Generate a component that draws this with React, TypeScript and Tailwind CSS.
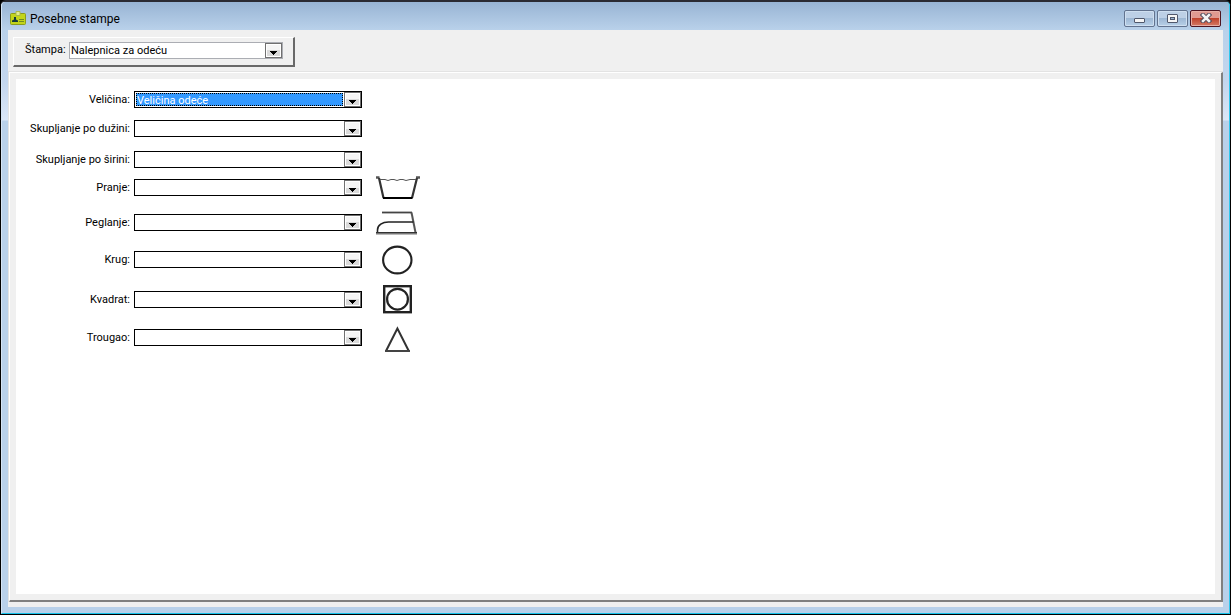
import type { ReactNode } from 'react'
import clsx from 'clsx'

type Field = {
  id: string
  label: string
  options?: string[]
  selected?: boolean
  space: string
  icon?: ReactNode
}

const fields: Field[] = [
  { id: 'velicina', label: 'Veličina:', options: ['Veličina odeće'], selected: true, space: 'mt-3' },
  { id: 'duzina', label: 'Skupljanje po dužini:', space: 'mt-3' },
  { id: 'sirina', label: 'Skupljanje po širini:', space: 'mt-3.5' },
  { id: 'pranje', label: 'Pranje:', space: 'mt-[11px]', icon: <WashIcon /> },
  { id: 'peglanje', label: 'Peglanje:', space: 'mt-[18px]', icon: <IronIcon /> },
  { id: 'krug', label: 'Krug:', space: 'mt-5', icon: <CircleIcon /> },
  { id: 'kvadrat', label: 'Kvadrat:', space: 'mt-[23px]', icon: <SquareIcon /> },
  { id: 'trougao', label: 'Trougao:', space: 'mt-[21px]', icon: <TriangleIcon /> },
]

function WashIcon() {
  return (
    <svg width="46" height="26" viewBox="-1 0 46 26" fill="none" stroke="#333" className="shrink-0">
      <path d="M1 2.5h3.5M41 2.5h4" stroke="#555" strokeWidth="2.5" />
      <path d="M4 3l4.5 20M42 3l-5 20" strokeWidth="2.2" />
      <path d="M5 4.5h5l3 1 3-1h3l3 1 3-1h3l3 1 4-1h6" stroke="#555" />
      <path d="M8 23h29.5" stroke="#000" strokeWidth="2" />
    </svg>
  )
}

function IronIcon() {
  return (
    <svg width="44" height="26" viewBox="0 0 44 26" fill="none" stroke="#333" className="shrink-0">
      <path d="M7 2.5h30" stroke="#444" strokeWidth="1.8" />
      <path d="M36.5 2.5l4 20" stroke="#555" strokeWidth="2" />
      <path d="M2.5 22v-2c0-5 5-8 11-8h25" stroke="#222" strokeWidth="1.6" />
      <path d="M1 23.5h41" stroke="#777" strokeWidth="2" />
      <path d="M1 22.5h41" stroke="#333" strokeWidth="1" />
    </svg>
  )
}

function CircleIcon() {
  return (
    <svg width="32" height="32" viewBox="0 0 32 32" fill="none" stroke="#222" className="mt-px shrink-0">
      <ellipse cx="16.3" cy="16" rx="14.2" ry="13.4" strokeWidth="2.1" />
    </svg>
  )
}

function SquareIcon() {
  return (
    <svg width="30" height="30" viewBox="0 0 30 30" fill="none" stroke="#222" className="shrink-0">
      <rect x="2.2" y="1.2" width="26.6" height="26" strokeWidth="2.4" />
      <circle cx="15.5" cy="14.2" r="10.4" strokeWidth="2.2" />
    </svg>
  )
}

function TriangleIcon() {
  return (
    <svg width="28" height="28" viewBox="0 0 28 28" fill="none" stroke="#333" className="mt-1 shrink-0">
      <path d="M3 25L14.4 2.5 25.8 25" strokeWidth="2" />
      <path d="M2 25h25" stroke="#444" strokeWidth="2" />
    </svg>
  )
}

function BadgeIcon() {
  return (
    <svg width="16" height="14" viewBox="0 0 16 14">
      <rect x="0.5" y="2.5" width="15" height="11" rx="1" fill="#c3d51a" stroke="#8b9c1b" />
      <path d="M6 0.5h4v4H6z" fill="#e3ec8c" stroke="#aab84b" />
      <path d="M2 11V9.5l2-1V6h2v2.5l2 1V11z" fill="#173b3b" />
      <path d="M9 8.5h5M9 10.5h5" stroke="#6f8a22" />
    </svg>
  )
}

function DropArrow() {
  return (
    <span className="pointer-events-none absolute inset-y-0 right-0 flex w-[17px] items-end justify-center border border-[#707070] bg-linear-to-b from-[#f5f5f5] from-50% to-[#dadada] to-50% pb-0.5 inset-ring inset-ring-white">
      <svg width="7" height="4" viewBox="0 0 7 4" shapeRendering="crispEdges">
        <path d="M0 0h7v1H6v1H5v1H4v1H3V3H2V2H1V1H0z" />
      </svg>
    </span>
  )
}

function Combo({ id, options = [''], selected, className }: { id: string; options?: string[]; selected?: boolean; className: string }) {
  return (
    <div className={clsx('relative flex h-[17px] border bg-white p-px pr-[18px]', className)}>
      <select
        id={id}
        className={clsx(
          'w-full appearance-none text-[11px] leading-[13px] outline-none',
          selected && 'border border-dotted border-black bg-[#3399ff] leading-[11px] text-white',
        )}
      >
        {options.map((option) => (
          <option key={option}>{option}</option>
        ))}
      </select>
      <DropArrow />
    </div>
  )
}

function WindowButton({ label, close, children }: { label: string; close?: boolean; children: ReactNode }) {
  return (
    <button
      type="button"
      aria-label={label}
      className={clsx(
        'flex h-[17px] w-[31px] items-center justify-center rounded-xs border inset-ring',
        close
          ? 'border-[#4d1420] bg-linear-to-b from-[#e09a91] from-45% via-[#bd3c26] via-45% to-[#d47a65] inset-ring-[#e6aea5]'
          : 'border-[#62738f] bg-linear-to-b from-[#bdd0e6] from-45% via-[#9bb5d2] via-45% to-[#b8d0e8] inset-ring-[#cfdff0]',
      )}
    >
      {children}
    </button>
  )
}

export default function App() {
  return (
    <div className="h-screen bg-black font-['Roboto',sans-serif] text-[11px] text-black">
      <div className="flex h-full flex-col rounded-t-md border border-t-2 border-black border-t-[#2b2b33] bg-[#b9d1ea]">
        <div className="flex min-h-0 flex-1 flex-col rounded-t-sm border-r border-b border-l border-r-[#30c8ee] border-b-[#16c3ea] border-l-[#d5e4f4] bg-[#b9d1ea] bg-[linear-gradient(#98b4d4,#b9d1ea_28px,#c3d6ee_80px,#dbe7f7_118px,#b9d1ea_119px)] px-1.5 pb-1.5">
          <header className="flex h-7 shrink-0 items-center pt-1 pl-0.5">
            <BadgeIcon />
            <h1 className="ml-1 flex-1 pt-0.5 text-xs">Posebne stampe</h1>
            <div className="flex gap-0.5 pr-0.5">
              <WindowButton label="Minimize">
                <svg width="11" height="11" viewBox="0 0 11 11">
                  <rect x="0.5" y="5.5" width="10" height="4" rx="0.5" fill="#f5f5f5" stroke="#50586c" />
                </svg>
              </WindowButton>
              <WindowButton label="Maximize">
                <svg width="11" height="9" viewBox="0 0 11 9">
                  <rect x="0.5" y="0.5" width="10" height="8" rx="0.5" fill="#f5f5f5" stroke="#50586c" />
                  <rect x="3.5" y="3.5" width="4" height="2" fill="#9bb5d2" stroke="#50586c" />
                </svg>
              </WindowButton>
              <WindowButton label="Close" close>
                <svg width="12" height="10" viewBox="0 0 12 10" strokeLinecap="square">
                  <path d="M3 2l6 6M9 2l-6 6" stroke="#544d5c" strokeWidth="4.5" />
                  <path d="M3 2l6 6M9 2l-6 6" stroke="#f4f4f4" strokeWidth="2.5" />
                </svg>
              </WindowButton>
            </div>
          </header>

          <main className="flex min-h-0 flex-1 flex-col bg-[#f0f0f0] pb-[5px]">
            <div className="mt-[7px] mb-1 ml-[5px] flex h-[30px] items-start self-start border-t border-r-2 border-b-2 border-l border-t-white border-r-[#696969] border-b-[#696969] border-l-white pt-1 pr-[10px] pl-[11px]">
              <label htmlFor="stampa" className="w-11 leading-4 whitespace-nowrap">
                Štampa:
              </label>
              <Combo id="stampa" options={['Nalepnica za odeću']} className="w-[214px] border-[#abadb3]" />
            </div>

            <div className="min-h-0 flex-1 border-t border-l border-[#e3e3e3]">
              <div className="h-full border-t border-r-2 border-b-2 border-l border-t-white border-r-[#808080] border-b-[#808080] border-l-white p-1.5">
                <form className="h-full overflow-hidden bg-white">
                  {fields.map((field) => (
                    <div key={field.id} className={clsx('flex h-[17px] items-center', field.space)}>
                      <label htmlFor={field.id} className="mr-1 w-[114px] text-right leading-4 whitespace-nowrap">
                        {field.label}
                      </label>
                      <Combo id={field.id} options={field.options} selected={field.selected} className="w-[228px] border-black" />
                      <span className="ml-3 flex w-[46px] items-center justify-center">{field.icon}</span>
                    </div>
                  ))}
                </form>
              </div>
            </div>
          </main>
        </div>
      </div>
    </div>
  )
}
